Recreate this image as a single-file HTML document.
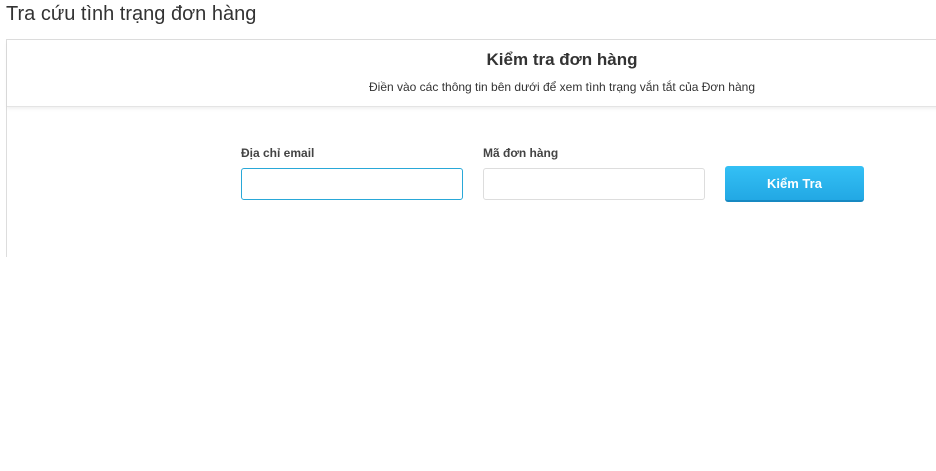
<!DOCTYPE html>
<html><head><meta charset="utf-8"><style>
body{margin:0;width:936px;height:471px;background:#fff;font-family:"Liberation Sans",Arial,sans-serif;position:relative;overflow:hidden;color:#333}
.t{position:absolute;left:6px;top:3px;font-size:20px;color:#333}
.box{position:absolute;left:6px;top:39px;width:940px;height:217px;border-left:1px solid #ddd;border-top:1px solid #ddd}
.hd{position:absolute;left:0;top:0;right:0;height:66px;border-bottom:1px solid #e4e4e4;box-shadow:0 2px 3px rgba(0,0,0,.06)}
.h1{position:absolute;left:475px;width:160px;top:10px;text-align:center;font-size:17px;font-weight:bold;color:#333}
.h2{position:absolute;left:355px;width:400px;top:40px;text-align:center;font-size:12px;color:#333}
.lb{position:absolute;top:146px;font-size:12px;font-weight:bold;color:#444}
.in{position:absolute;top:168px;width:220px;height:30px;border:1px solid #ddd;border-radius:3px;box-sizing:content-box}
.btn{position:absolute;left:725px;top:166px;width:139px;height:36px;border-radius:3px;background:linear-gradient(#34c0f5,#22a8e4);border-bottom:2px solid #1689c2;box-sizing:border-box;color:#fff;font-weight:bold;font-size:13px;text-align:center;line-height:35px}
</style></head><body>
<div class="t">Tra cứu tình trạng đơn hàng</div>
<div class="box"><div class="hd"></div>
<div class="h1">Kiểm tra đơn hàng</div>
<div class="h2">Điền vào các thông tin bên dưới để xem tình trạng vắn tắt của Đơn hàng</div>
</div>
<div class="lb" style="left:241px">Địa chỉ email</div>
<div class="lb" style="left:483px">Mã đơn hàng</div>
<div class="in" style="left:241px;border-color:#29a8d8"></div>
<div class="in" style="left:483px"></div>
<div class="btn">Kiểm Tra</div>
</body></html>
